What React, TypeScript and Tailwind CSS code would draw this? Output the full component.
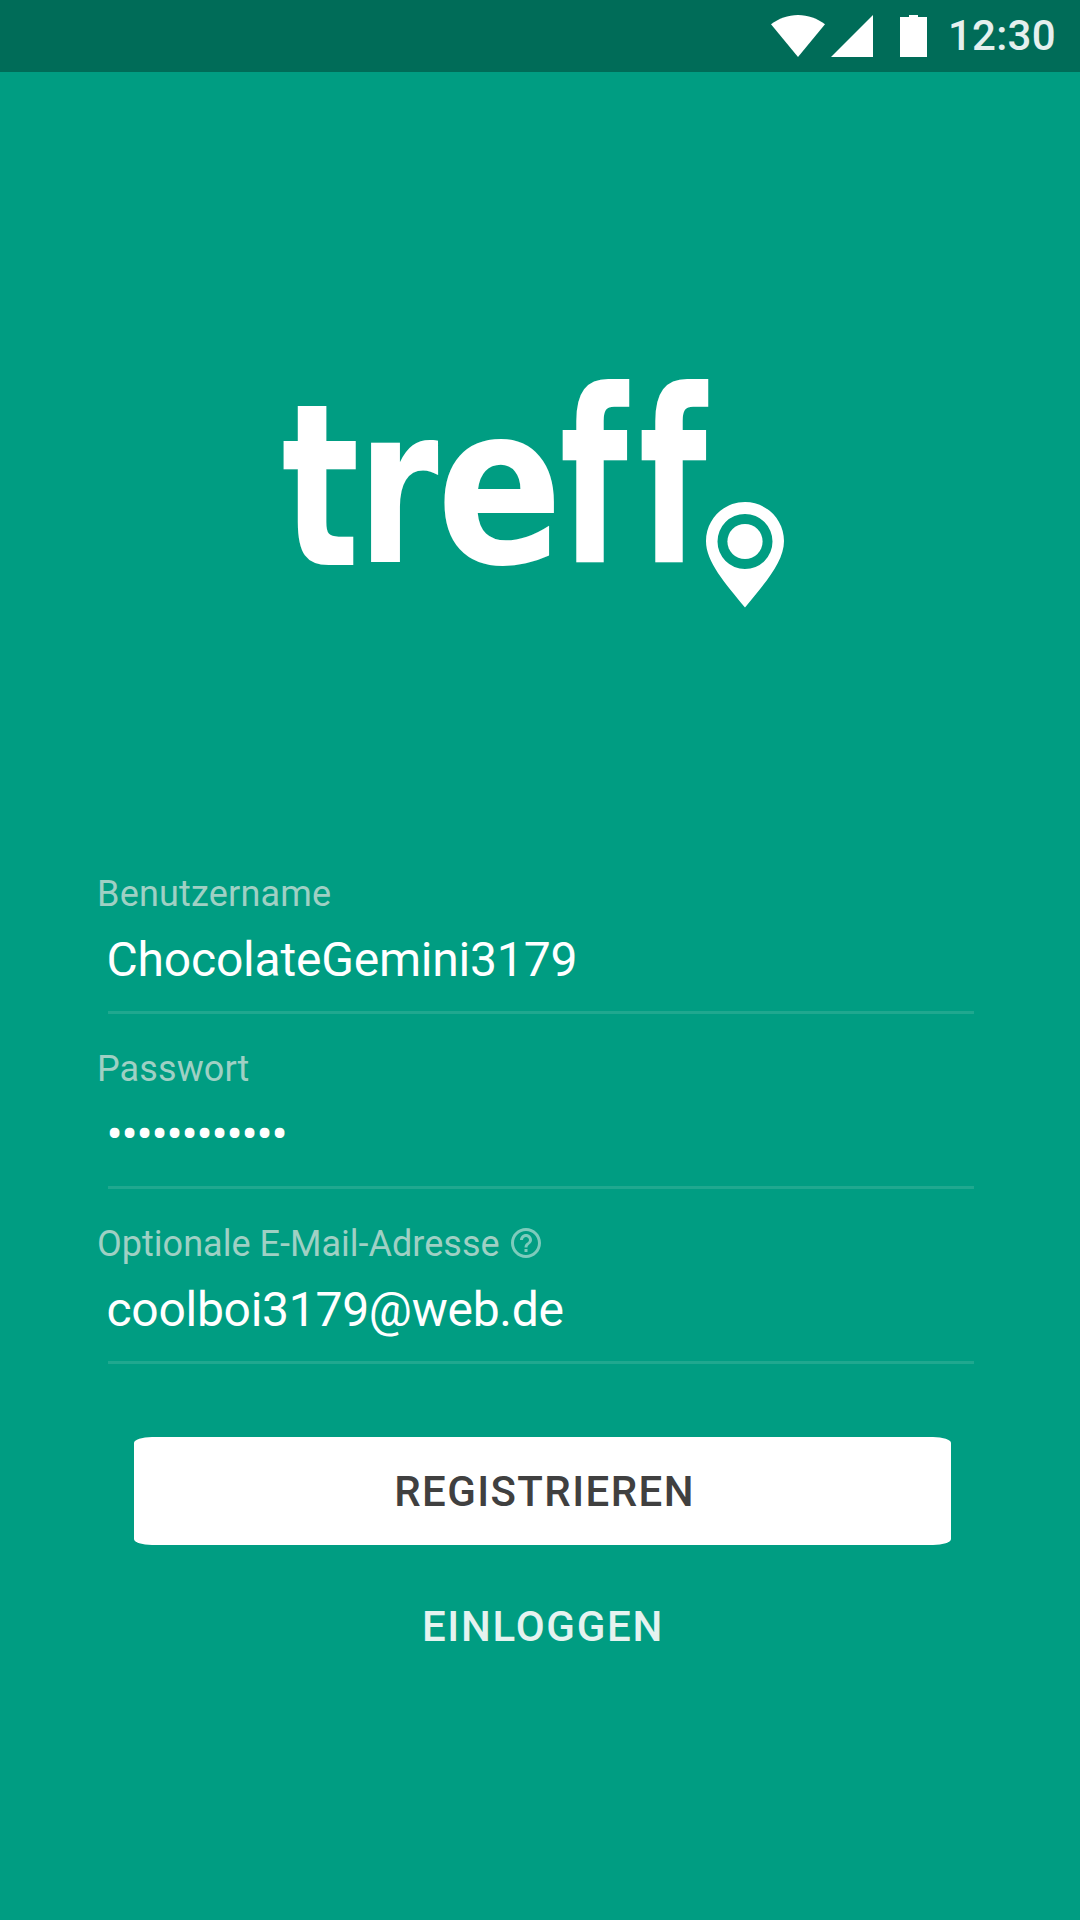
import { MdHelpOutline } from "react-icons/md";

const letters = [
  { char: "t", transform: "translate(281.6 565) scale(0.815 1.135)" },
  { char: "r", transform: "translate(357.3 562) scale(0.825 1.089)" },
  { char: "e", transform: "translate(436.5 562.7) scale(0.932 1.104)" },
  { char: "f", transform: "translate(559.7 562) scale(0.782 1.2)" },
  { char: "f", transform: "translate(638.7 562) scale(0.782 1.2)" },
];

function StatusBar() {
  return (
    <header className="flex h-[72px] items-start bg-[#006c58] pl-[771px]">
      <svg width="156" height="42" viewBox="771 15 156 42" className="mt-[15px]" fill="#fff">
        <path d="M771 24.3C778.5 18.5 788 15 798 15s19.500 3.500 27 9.300L798 57z" />
        <path d="M831 57l42-42v42z" />
        <path d="M909 15h9v2h9v40h-27V17h9z" />
      </svg>
      <span className="ml-[21px] text-[42px] leading-[72px] font-medium tracking-[0.25px] text-[#e5f0ee]">12:30</span>
    </header>
  );
}

function Logo() {
  return (
    <svg width="560" height="310" viewBox="260 320 560 310" className="mt-[248px] ml-[260px] shrink-0" fill="#fff">
      {letters.map((l, i) => (
        <text key={i} transform={l.transform} className="font-['DejaVu_Sans'] text-[200px] font-bold">
          {l.char}
        </text>
      ))}
      <path
        fillRule="evenodd"
        d="M745 502C723.500 502 706 519.500 706 541C706 562 725 583 745 607.500C765 583 784 562 784 541C784 519.500 766.500 502 745 502ZM745 514a27.500 27.500 0 1 1 0 55a27.500 27.500 0 1 1 0-55Z"
      />
      <circle cx="745" cy="541.5" r="17.6" />
    </svg>
  );
}

type FieldProps = { label: string; value: string; labelClass?: string; valueClass: string; help?: boolean };

function Field({ label, value, labelClass = "", valueClass, help }: FieldProps) {
  return (
    <div className="h-[175px]">
      <div className="flex h-[42px] items-center gap-[8px] pl-[97px] text-[36px] leading-[42px] text-[#9fd0c4]">
        <span className={labelClass}>{label}</span>
        {help && <MdHelpOutline className="-mt-[2px] size-[36px] text-[#7dcbbc]" />}
      </div>
      <div className={`mt-[17px] h-[56px] pl-[106.5px] text-[48px] leading-[56px] whitespace-nowrap text-white ${valueClass}`}>
        {value}
      </div>
      <div className="mt-[23px] ml-[108px] h-[3px] w-[866px] bg-[#1fa88f]" />
    </div>
  );
}

export default function App() {
  return (
    <main className="flex h-[1920px] w-[1080px] flex-col overflow-hidden bg-[#009d82] font-[Roboto,sans-serif]">
      <StatusBar />
      <Logo />
      <form className="mt-[243px]">
        <Field label="Benutzername" value="ChocolateGemini3179" labelClass="tracking-[0.2px]" valueClass="tracking-[-0.2px]" />
        <Field label="Passwort" value="••••••••••••" labelClass="tracking-[0.1px]" valueClass="tracking-[-1.2px]" />
        <Field label="Optionale E-Mail-Adresse" value="coolboi3179@web.de" labelClass="tracking-[0.02px]" valueClass="tracking-[-0.28px]" help />
        <button
          type="button"
          className="mt-[39px] ml-[134px] block h-[108px] w-[817px] rounded-[18px/6px] bg-white pl-[4px] text-[42px] font-medium tracking-[1.42px] text-[#404040]"
        >
          REGISTRIEREN
        </button>
        <button
          type="button"
          className="mt-[27px] ml-[134px] block h-[108px] w-[817px] pl-[1px] text-[42px] font-medium tracking-[1.75px] text-[#e5f3f0]"
        >
          EINLOGGEN
        </button>
      </form>
    </main>
  );
}
